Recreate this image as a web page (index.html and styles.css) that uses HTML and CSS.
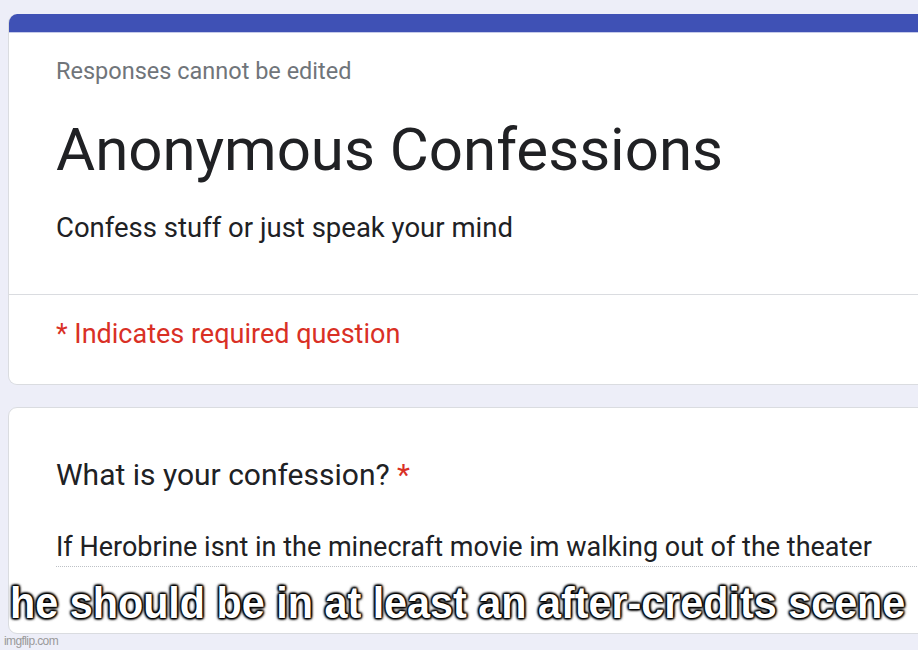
FILE: index.html
```html
<!DOCTYPE html>
<html>
<head>
<meta charset="utf-8">
<link rel="stylesheet" href="styles.css">
</head>
<body>
<div class="page">
  <div class="card header-card">
    <div class="bar"></div>
    <div class="head">
      <div class="note">Responses cannot be edited</div>
      <div class="title">Anonymous Confessions</div>
      <div class="desc">Confess stuff or just speak your mind</div>
    </div>
    <div class="required">* Indicates required question</div>
  </div>
  <div class="card q-card">
    <div class="question">What is your confession? <span class="star">*</span></div>
    <div class="answer">If Herobrine isnt in the minecraft movie im walking out of the theater</div>
  </div>
</div>
<div class="caption"><span class="caption-text">he should be in at least an after-credits scene</span></div>
<div class="watermark">imgflip.com</div>
</body>
</html>
```
FILE: styles.css
```css
html, body {
  margin: 0;
  padding: 0;
}
body {
  width: 918px;
  height: 650px;
  overflow: hidden;
  background: #edeef8;
  position: relative;
  font-family: Roboto, "Liberation Sans", sans-serif;
  color: #202124;
}
.page {
  padding: 14px 0 0 8px;
  display: flex;
  flex-direction: column;
  gap: 22px;
}
.card {
  width: 960px;
  background: #fff;
  border: 1px solid #dadce0;
  border-radius: 9px;
  box-sizing: border-box;
}
.header-card {
  border-top: none;
  overflow: hidden;
  height: 371px;
}
.bar {
  height: 19px;
  background: #3f51b5;
  border-bottom: 1px solid #c5cae9;
  box-sizing: border-box;
}
.head {
  padding: 24px 0 0 47px;
  height: 262px;
  box-sizing: border-box;
  border-bottom: 1px solid #dadce0;
}
.note {
  font-size: 23.5px;
  line-height: 28px;
  color: #70757a;
}
.title {
  font-size: 60px;
  line-height: 72px;
  margin-top: 28.5px;
  color: #202124;
}
.desc {
  font-size: 27.5px;
  line-height: 34px;
  margin-top: 25.5px;
  color: #202124;
}
.required {
  font-size: 27px;
  line-height: 32px;
  color: #d93025;
  padding: 23px 0 0 47px;
}
.q-card {
  height: 227px;
  padding: 49px 0 0 47px;
}
.question {
  font-size: 30px;
  line-height: 36px;
  color: #202124;
}
.star {
  color: #d93025;
}
.answer {
  margin-top: 38px;
  font-size: 27px;
  line-height: 32px;
  padding-bottom: 3px;
  border-bottom: 1px dotted #bdc1c6;
  color: #202124;
}
.caption {
  position: absolute;
  left: 10px;
  top: 578px;
  white-space: nowrap;
}
.caption-text {
  display: inline-block;
  font-family: "Liberation Sans", Arial, sans-serif;
  font-weight: bold;
  font-size: 45px;
  line-height: 50px;
  color: #fff;
  transform: scaleX(0.918);
  transform-origin: left center;
  text-shadow: 0 0 4px #000, 0 0 4px #000, 0 0 3px #000, 1px 1px 2px #000, -1px -1px 2px #000, 1px -1px 2px #000, -1px 1px 2px #000;
}
.watermark {
  position: absolute;
  left: 4px;
  top: 634px;
  font-family: "Liberation Sans", Arial, sans-serif;
  font-size: 12px;
  letter-spacing: -0.6px;
  color: #9a9a9a;
}
```
